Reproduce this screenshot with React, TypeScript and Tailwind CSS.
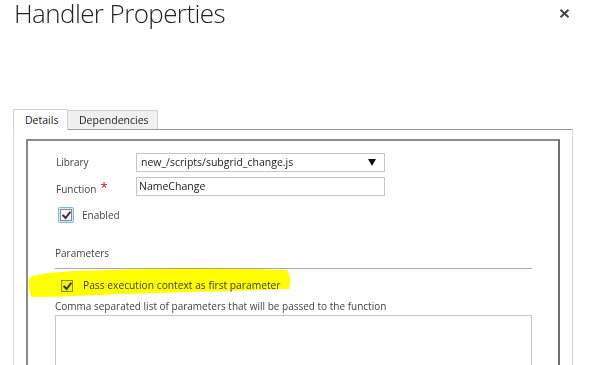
import React from "react";

const font = { fontFamily: '"Open Sans", "Noto Sans", sans-serif' };

function CheckMark({ size = 10 }: { size?: number }) {
  return (
    <svg width={size} height={size} viewBox="0 0 10 10">
      <path d="M1.5 5.2 L4 7.8 L8.6 1.8" fill="none" stroke="#333" strokeWidth="2.2" strokeLinecap="square" />
    </svg>
  );
}

export default function App() {
  return (
    <div className="relative w-[589px] h-[365px] overflow-hidden bg-white text-[#444]" style={font}>
      {/* header */}
      <div className="flex items-start justify-between h-[109px] pl-[14px] pr-[19px]">
        <h1 className="text-[26px] leading-[26px] font-light text-[#222] tracking-[-0.6px]">Handler Properties</h1>
        <svg className="mt-[9px]" width="11" height="9" viewBox="0 0 11 9">
          <path d="M1.5 0.8 L9.5 8.2 M9.5 0.8 L1.5 8.2" stroke="#444" strokeWidth="2" />
        </svg>
      </div>

      {/* tabs */}
      <div className="ml-[13px] mr-[16px]">
        <div className="flex items-end h-[20px]">
          <div className="relative z-10 h-[21px] w-[55px] -mb-px bg-white border border-b-0 border-[#d0d0d0] text-[10.5px] leading-[20px] text-[#222] pl-[11px]">
            Details
          </div>
          <div className="h-[19px] w-[90px] bg-[#f0f0f0] border border-l-0 border-b-0 border-[#cfcfcf] text-[10.5px] leading-[19px] text-[#222] pl-[11px]">
            Dependencies
          </div>
        </div>

        {/* panel */}
        <div className="border-t border-t-[#9a9a9a] border-x border-x-[#d6d6d6] h-[260px] pt-[9px] pl-[12px] pr-[12px]">
          <div className="h-[260px] border-2 border-t-[#8a8a8a] border-l-[#8a8a8a] border-r-[#6e6e6e] border-b-[#6e6e6e] pt-[12px] pl-[27px] pr-[26px]">
            <div className="flex items-center h-[19px] text-[10px]">
              <div className="w-[81px] pl-px">Library</div>
              <div className="flex items-center justify-between w-[249px] h-[19px] border border-[#c6c6c6] pl-[4px] pr-[8px] text-[#222] text-[10.5px]">
                <span>new_/scripts/subgrid_change.js</span>
                <svg width="8" height="7" viewBox="0 0 8 7"><path d="M0 0 H8 L4 7 Z" fill="#111" /></svg>
              </div>
            </div>
            <div className="flex items-start h-[19px] mt-[5px] text-[10px]">
              <div className="w-[81px] pl-px pt-[4px] leading-[16px]">
                Function<span className="ml-[4px] text-[#d00] text-[13px] leading-[10px] relative top-[-1px]">*</span>
              </div>
              <div className="w-[249px] h-[19px] border border-[#c6c6c6] pl-[2px] text-[#222] text-[10.5px] leading-[17px]">NameChange</div>
            </div>
            <div className="flex items-center mt-[11px] h-[16px] text-[10px]">
              <div className="ml-[3px] w-[16px] h-[16px] rounded-[2px] border border-[#7eb4ea] bg-[#dcecfc] flex items-center justify-center">
                <div className="w-[12px] h-[12px] border border-[#8a8a8a] bg-[#f4f4f4] flex items-center justify-center">
                  <CheckMark size={9} />
                </div>
              </div>
              <span className="ml-[8px]">Enabled</span>
            </div>

            <div className="mt-[22px] text-[10px] leading-[16px]">Parameters</div>
            <div className="mt-[7px] h-px bg-[#a8a8a8]" />

            <div className="flex items-center mt-[10px] h-[14px] text-[10.25px]">
              <div className="ml-[6px] w-[12px] h-[12px] border border-[#8a8a8a] bg-[#f4f4f4] flex items-center justify-center">
                <CheckMark size={9} />
              </div>
              <span className="ml-[10px] text-[#3a3a3a]">Pass execution context as first parameter</span>
            </div>

            <div className="mt-[5px] text-[10px] leading-[16px]">Comma separated list of parameters that will be passed to the function</div>
            <div className="mt-px h-[80px] border border-[#c6c6c6]" />
          </div>
        </div>
      </div>

      {/* yellow highlighter annotation */}
      <svg className="absolute left-0 top-0 pointer-events-none mix-blend-multiply" width="589" height="365">
        <path
          d="M30 277 C 45 272, 70 271, 110 270 C 170 268, 230 268, 287 270 C 291 276, 291 283, 289 289 C 240 291, 180 292, 120 294 C 80 296, 50 297, 32 297 C 28 291, 28 283, 30 277 Z"
          fill="#ffff00"
        />
      </svg>
    </div>
  );
}
